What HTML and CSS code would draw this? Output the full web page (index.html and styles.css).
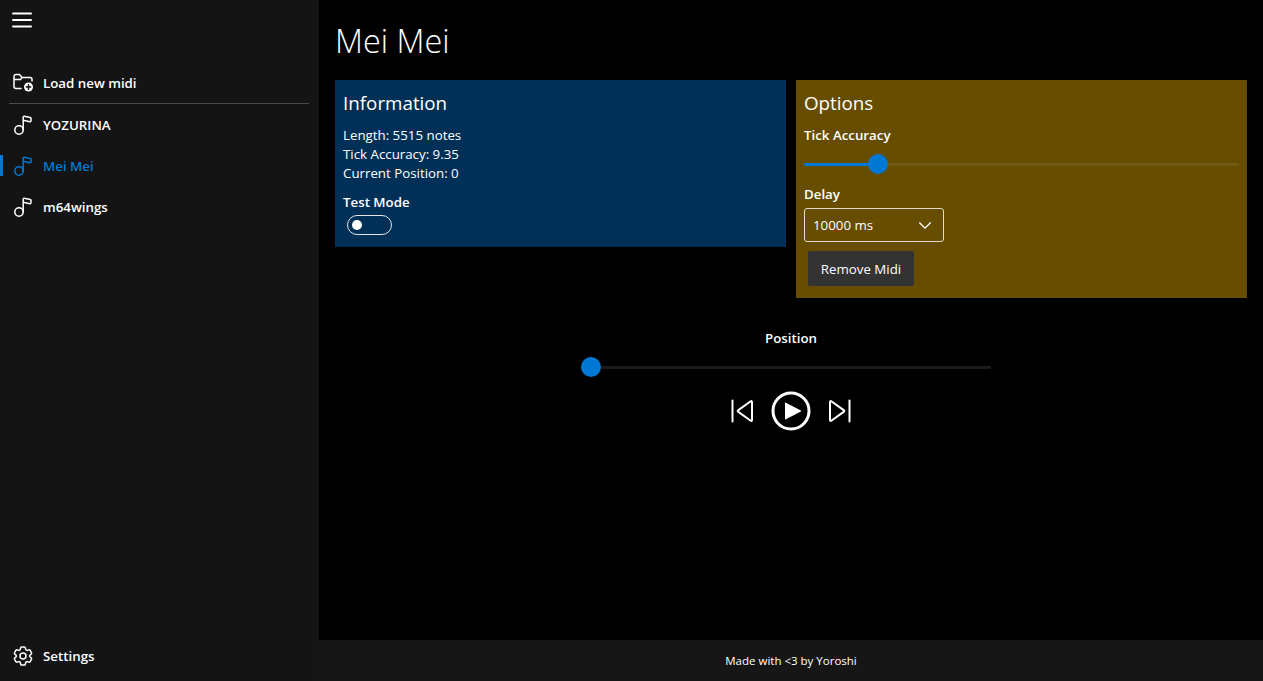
FILE: index.html
```html
<!DOCTYPE html>
<html lang="en">
<head>
    <meta charset="UTF-8">
    <meta name="viewport" content="width=device-width, initial-scale=1.0">
    <title>Mei Mei</title>
    <link rel="stylesheet" href="styles.css">
</head>
<body>

<div class="app">
    <!-- Sidebar -->
    <aside class="sidebar">
        <button class="menu-button" aria-label="Menu">
            <svg class="icon icon-menu" viewBox="0 0 20 20"><path d="M1 2.500h18M1 9h18M1 15.500h18"/></svg>
        </button>

        <nav class="nav">
            <a class="nav-item">
                <svg class="icon" viewBox="0 0 20 20">
                    <path d="M8 15.500H3a2 2 0 0 1-2-2V3.500a2 2 0 0 1 2-2h3.500l2.500 3h8a2 2 0 0 1 2 2V8M1 6.500h6.500L9 4.500"/>
                    <circle class="icon-fill" cx="15.500" cy="14" r="4.500"/>
                    <path class="icon-cut" d="M15.500 11.800v4.400M13.300 14h4.400"/>
                </svg>
                <span>Load new midi</span>
            </a>
            <div class="nav-divider"></div>
            <a class="nav-item">
                <svg class="icon" viewBox="0 0 20 20"><use href="#note"/></svg>
                <span>YOZURINA</span>
            </a>
            <a class="nav-item active">
                <svg class="icon" viewBox="0 0 20 20"><use href="#note"/></svg>
                <span>Mei Mei</span>
            </a>
            <a class="nav-item">
                <svg class="icon" viewBox="0 0 20 20"><use href="#note"/></svg>
                <span>m64wings</span>
            </a>
        </nav>

        <a class="nav-item settings">
            <svg class="icon" viewBox="2 2 20 20">
                <path d="M9.594 3.940c.09-.542.56-.94 1.110-.94h2.593c.55 0 1.020.398 1.110.94l.213 1.281c.063.374.313.686.645.870.074.04.147.083.22.127.325.196.72.257 1.075.124l1.217-.456a1.125 1.125 0 0 1 1.370.49l1.296 2.247a1.125 1.125 0 0 1-.26 1.431l-1.003.827c-.293.241-.438.613-.43.992a7.723 7.723 0 0 1 0 .255c-.008.378.137.75.43.991l1.004.827c.424.35.534.955.26 1.430l-1.298 2.247a1.125 1.125 0 0 1-1.369.491l-1.217-.456c-.355-.133-.75-.072-1.076.124a6.470 6.470 0 0 1-.22.128c-.331.183-.581.495-.644.869l-.213 1.281c-.09.543-.56.94-1.110.94h-2.594c-.55 0-1.019-.398-1.110-.94l-.213-1.281c-.062-.374-.312-.686-.644-.87a6.520 6.520 0 0 1-.22-.127c-.325-.196-.72-.257-1.076-.124l-1.217.456a1.125 1.125 0 0 1-1.369-.49l-1.297-2.247a1.125 1.125 0 0 1 .26-1.431l1.004-.827c.292-.24.437-.613.43-.991a6.932 6.932 0 0 1 0-.255c.007-.38-.138-.751-.43-.992l-1.004-.827a1.125 1.125 0 0 1-.26-1.430l1.297-2.247a1.125 1.125 0 0 1 1.370-.491l1.216.456c.356.133.751.072 1.076-.124.072-.044.146-.086.22-.128.332-.183.582-.495.644-.869l.214-1.280Z"/>
                <circle cx="12" cy="12" r="3"/>
            </svg>
            <span>Settings</span>
        </a>
    </aside>

    <!-- Contenuto -->
    <div class="main">
        <div class="content">
            <h1 class="title">Mei Mei</h1>

            <div class="panels">
                <section class="panel panel-info">
                    <h2>Information</h2>
                    <p>Length: 5515 notes</p>
                    <p>Tick Accuracy: 9.35</p>
                    <p>Current Position: 0</p>
                    <div class="label test-label">Test Mode</div>
                    <div class="toggle"><span class="toggle-knob"></span></div>
                </section>

                <section class="panel panel-options">
                    <h2>Options</h2>
                    <div class="label">Tick Accuracy</div>
                    <input class="slider slider-tick" type="range" min="0" max="100" value="15.400" step="0.100" aria-label="Tick Accuracy">
                    <div class="label delay-label">Delay</div>
                    <div class="select">
                        <span>10000 ms</span>
                        <svg viewBox="0 0 16 10"><path d="M1.500 1.500 8 8l6.500-6.500"/></svg>
                    </div>
                    <button class="remove-button">Remove Midi</button>
                </section>
            </div>

            <div class="player">
                <div class="label">Position</div>
                <input class="slider slider-position" type="range" min="0" max="100" value="0" aria-label="Position">
                <div class="controls">
                    <svg class="control" viewBox="0 0 24 24"><path d="M2.500 1.500v21M22 2.800v18.400a.8.8 0 0 1-1.300.6L8 12.600a.8.8 0 0 1 0-1.200L20.700 2.200a.8.8 0 0 1 1.300.6Z"/></svg>
                    <svg class="control-play" viewBox="0 0 40 40">
                        <circle cx="20" cy="20" r="18"/>
                        <path d="M14 12.200v15.600a.6.6 0 0 0 .9.5l15-7.800a.6.6 0 0 0 0-1l-15-7.800a.6.600 0 0 0-.9.5Z"/>
                    </svg>
                    <svg class="control" viewBox="0 0 24 24"><path d="M21.500 1.500v21M2 2.800v18.400a.8.8 0 0 0 1.300.6L16 12.600a.8.8 0 0 0 0-1.200L3.300 2.200a.8.8 0 0 0-1.300.6Z"/></svg>
                </div>
            </div>
        </div>

        <footer class="footer">Made with &lt;3 by Yoroshi</footer>
    </div>
</div>

<svg class="defs" aria-hidden="true">
    <symbol id="note" viewBox="0 0 20 20">
        <circle cx="6" cy="15" r="4.200"/>
        <path d="M10.200 15V2.200c0-.6.4-1 1-.9l6 1.200c.5.1.8.5.8 1v2.300c0 .6-.5 1-1.100.9l-6.700-1.400"/>
    </symbol>
</svg>

</body>
</html>
```

FILE: styles.css
```css
/* Impostazioni generali */
* {
    box-sizing: border-box;
}

body {
    margin: 0;
    height: 100vh;
    overflow: hidden;
    background-color: #000;
    color: #fff;
    font-family: "Open Sans", "Noto Sans", sans-serif;
    font-size: 13.300px;
}

.defs {
    display: none;
}

.app {
    display: flex;
    height: 100%;
}

.icon {
    width: 20px;
    height: 20px;
    flex-shrink: 0;
    fill: none;
    stroke: currentColor;
    stroke-width: 1.500;
    stroke-linecap: round;
    stroke-linejoin: round;
}

.icon .icon-fill {
    fill: currentColor;
    stroke: none;
}

.icon .icon-cut {
    stroke: #141414;
}

.icon-menu {
    stroke-width: 2;
}

/* Sidebar */
.sidebar {
    display: flex;
    flex-direction: column;
    width: 319px;
    flex-shrink: 0;
    background-color: #141414;
}

.menu-button {
    display: flex;
    height: 42px;
    padding: 11px 0 0 12px;
    background: none;
    border: none;
    color: #fff;
}

.nav {
    flex: 1;
    padding-top: 20px;
}

.nav-item {
    position: relative;
    display: flex;
    align-items: center;
    gap: 10px;
    height: 41px;
    padding-left: 13px;
    font-weight: 600;
}

.nav-divider {
    height: 1px;
    margin: 0 10px 0 9px;
    background-color: #4a4a4a;
}

.nav-item.active {
    color: #0078d4;
}

.nav-item.active::before {
    content: "";
    position: absolute;
    left: 0;
    top: 10px;
    width: 3px;
    height: 21px;
    background-color: #0078d4;
}

.settings {
    margin-bottom: 5px;
}

/* Contenuto */
.main {
    display: flex;
    flex: 1;
    flex-direction: column;
    min-width: 0;
}

.content {
    flex: 1;
    padding: 0 16px;
}

.title {
    height: 80px;
    margin: 0;
    font-size: 32.400px;
    font-weight: 300;
    line-height: 80px;
}

.panels {
    display: grid;
    grid-template-columns: 1fr 1fr;
    gap: 10px;
    align-items: start;
}

.panel {
    padding: 8px;
}

.panel h2 {
    margin: 0 0 8px;
    font-size: 18.800px;
    font-weight: 400;
    line-height: 30px;
}

.panel p {
    margin: 0;
    line-height: 19px;
}

.panel-info {
    height: 167px;
    background-color: #003057;
}

.panel-options {
    height: 218px;
    background-color: #664d00;
}

.label {
    font-weight: 600;
    line-height: 19px;
}

.test-label {
    margin-top: 10px;
}

.delay-label {
    margin-top: 11px;
}

.toggle {
    display: flex;
    align-items: center;
    width: 45px;
    height: 20px;
    margin: 3px 0 0 4px;
    padding-left: 4px;
    border: 1px solid #e6e6e6;
    border-radius: 10px;
}

.toggle-knob {
    width: 10px;
    height: 10px;
    border-radius: 50%;
    background-color: #fff;
}

/* Slider */
.slider {
    display: block;
    height: 20px;
    margin: 0;
    background: none;
    appearance: none;
    -webkit-appearance: none;
}

.slider::-webkit-slider-runnable-track {
    height: 3px;
    border-radius: 2px;
}

.slider::-webkit-slider-thumb {
    width: 20px;
    height: 20px;
    margin-top: -8.500px;
    border-radius: 50%;
    background-color: #0078d4;
    -webkit-appearance: none;
}

.slider-tick {
    width: 435px;
    margin-top: 9px;
}

.slider-tick::-webkit-slider-runnable-track {
    background: linear-gradient(to right, #0078d4 74px, #725a14 74px);
}

.slider-position {
    width: 420px;
}

.slider-position::-webkit-slider-runnable-track {
    margin: 0;
    background: linear-gradient(to right, transparent 10px, #1b1b1b 10px, #1b1b1b 410px, transparent 410px);
}

.select {
    display: flex;
    align-items: center;
    justify-content: space-between;
    width: 140px;
    height: 34px;
    margin-top: 4px;
    padding: 0 11px 0 8px;
    border: 1px solid #e0dccf;
    border-radius: 3px;
}

.select svg {
    width: 14px;
    height: 9px;
    fill: none;
    stroke: #fff;
    stroke-width: 1.600;
}

.remove-button {
    display: block;
    width: 106px;
    height: 35px;
    margin: 9px 0 0 4px;
    padding: 0;
    background-color: #333;
    border: none;
    border-radius: 2px;
    color: #fff;
    font: inherit;
}

/* Player */
.player {
    display: flex;
    flex-direction: column;
    align-items: center;
    margin-top: 31px;
}

.player .label {
    margin-bottom: 9px;
}

.controls {
    display: flex;
    align-items: center;
    gap: 18px;
    margin-top: 14px;
}

.control {
    width: 24px;
    height: 24px;
    fill: none;
    stroke: #fff;
    stroke-width: 2;
    stroke-linecap: round;
    stroke-linejoin: round;
}

.control-play {
    width: 40px;
    height: 40px;
    margin: 0 -1px;
}

.control-play circle {
    fill: none;
    stroke: #fff;
    stroke-width: 3;
}

.control-play path {
    fill: #fff;
}

/* Footer */
.footer {
    display: flex;
    align-items: center;
    justify-content: center;
    height: 41px;
    background-color: #161616;
    font-size: 11.500px;
}
```
